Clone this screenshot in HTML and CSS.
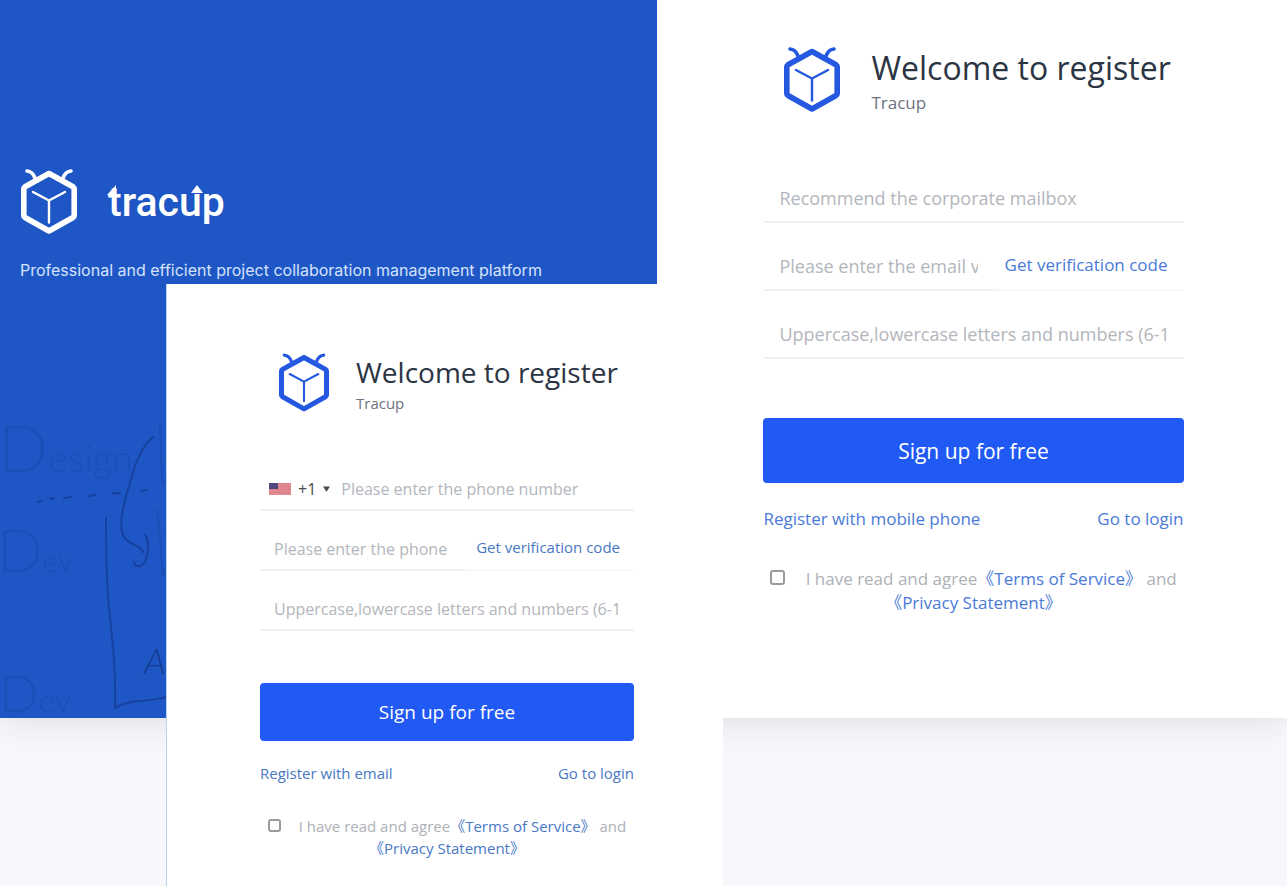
FILE: index.html
```html
<!DOCTYPE html>
<html lang="en">
<head>
  <meta charset="UTF-8">
  <meta name="viewport" content="width=device-width, initial-scale=1.0">
  <title>Tracup - Register</title>
  <link rel="stylesheet" href="styles.css">
</head>
<body>

  <!-- shared logo -->
  <svg class="sprite" aria-hidden="true">
    <symbol id="logo" viewBox="0 0 58 66">
      <g fill="none" stroke="currentColor" stroke-linecap="round" stroke-linejoin="round">
        <path stroke-width="5.6" d="M29 5 53 18.300q1.200.8 1.200 2V47q0 1.400-1.200 2L29 62.500 5 49q-1.200-.6-1.200-2V20.300q0-1.200 1.200-2Z"/>
        <path stroke-width="3.600" d="M7 2.500c4 .3 6.500 3 8 7M51 2.500c-4 .3-6.500 3-8 7"/>
        <path stroke-width="2.400" d="M13 23.500 29 32l16-8.500M29 32v22"/>
      </g>
    </symbol>
  </svg>

  <main class="page">
    <div class="hero">
      <section class="brand">
        <div class="brand-row">
          <svg class="brand-logo" role="img" aria-label="Tracup"><use href="#logo"/></svg>
          <svg class="wordmark" viewBox="0 0 130 60">
            <text x="2" y="44">tracup</text>
            <path d="M1 23 10 13v10zM85 21l6-8 6 8z"/>
          </svg>
        </div>
        <p class="tagline">Professional and efficient project collaboration management platform</p>

        <!-- whiteboard scribbles -->
        <svg class="board" viewBox="0 0 166 328" aria-hidden="true">
          <g class="board-text">
            <text x="-2" y="82"><tspan font-size="66">D</tspan><tspan font-size="38">esign</tspan></text>
            <text x="-3" y="182"><tspan font-size="60">D</tspan><tspan font-size="30">ev</tspan></text>
            <text x="-1" y="322"><tspan font-size="52">D</tspan><tspan font-size="32">ev</tspan></text>
          </g>
          <text class="board-a" x="144" y="284">A</text>
          <g class="board-lines">
            <path d="M153 47c-10 8-17 24-22 42-6 20-12 40-9 53 3 13 17 11 21 20M145 145c5 4 4 28-5 31q-5 1-6-4"/>
            <path d="M38 112l3-1M50 108q2 2 4 0M64 108l7-1M89 106l6-1M113 103q4 1 7 0M141 101l6-1"/>
            <path d="M106 128c0 30 0 60 3 90 4 36 7 66 6 100 16-10 30-5 51-11"/>
            <path class="faint" d="M160 34l2 58h4M157 120c3 24 4 44 6 65h3"/>
          </g>
        </svg>
      </section>

      <section class="email-panel" id="email">
        <form class="register register-lg">
          <header class="register-head">
            <svg class="register-logo" aria-hidden="true"><use href="#logo"/></svg>
            <div>
              <h1>Welcome to register</h1>
              <p>Tracup</p>
            </div>
          </header>
          <div class="field">
            <input type="email" aria-label="Email" placeholder="Recommend the corporate mailbox">
          </div>
          <div class="field code-field">
            <input type="text" aria-label="Email verification code" placeholder="Please enter the email v">
            <button type="button" class="code-btn">Get verification code</button>
          </div>
          <div class="field">
            <input type="password" aria-label="Password" placeholder="Uppercase,lowercase letters and numbers (6-1">
          </div>
          <button type="submit" class="submit">Sign up for free</button>
          <nav class="links">
            <a href="#phone">Register with mobile phone</a>
            <a href="#login">Go to login</a>
          </nav>
          <div class="agree">
            <input type="checkbox" id="agree-email">
            <label for="agree-email">I have read and agree<a href="#terms">《Terms of Service》</a> and <a href="#privacy">《Privacy Statement》</a></label>
          </div>
        </form>
      </section>
    </div>

    <section class="phone-window" id="phone">
      <form class="register">
        <header class="register-head">
          <svg class="register-logo" aria-hidden="true"><use href="#logo"/></svg>
          <div>
            <h1>Welcome to register</h1>
            <p>Tracup</p>
          </div>
        </header>
        <div class="field phone-field">
          <button type="button" class="country" aria-label="Country code +1">
            <svg class="flag" viewBox="0 0 22 12">
              <path fill="#e48a95" d="M0 0h22v12H0z"/>
              <path stroke="#dc7c89" d="M0 .5h22M0 3.500h22M0 6.500h22M0 9.500h22"/>
              <path fill="#4d4a7c" d="M0 0h9v6H0z"/>
            </svg>
            <span>+1</span>
            <svg class="caret" viewBox="0 0 8 6"><path d="M0 0h8L4 6z"/></svg>
          </button>
          <input type="tel" aria-label="Phone number" placeholder="Please enter the phone number">
        </div>
        <div class="field code-field">
          <input type="text" aria-label="Phone verification code" placeholder="Please enter the phone">
          <button type="button" class="code-btn">Get verification code</button>
        </div>
        <div class="field">
          <input type="password" aria-label="Password" placeholder="Uppercase,lowercase letters and numbers (6-1">
        </div>
        <button type="submit" class="submit">Sign up for free</button>
        <nav class="links">
          <a href="#email">Register with email</a>
          <a href="#login">Go to login</a>
        </nav>
        <div class="agree">
          <input type="checkbox" id="agree-phone">
          <label for="agree-phone">I have read and agree<a href="#terms">《Terms of Service》</a> and <a href="#privacy">《Privacy Statement》</a></label>
        </div>
      </form>
    </section>
  </main>

</body>
</html>
```
FILE: styles.css
```css
* {
  box-sizing: border-box;
}
body {
  margin: 0;
  font-family: "Open Sans", "Noto Sans CJK SC", sans-serif;
  background: #f7f8fb;
}
h1, p {
  margin: 0;
  font-weight: 400;
}
a {
  text-decoration: none;
}
button, input {
  font: inherit;
  border: 0;
  background: none;
  padding: 0;
}
button {
  cursor: pointer;
}
.sprite {
  display: none;
}

.page {
  position: relative;
  min-height: 100vh;
  overflow: hidden;
}
.hero {
  display: grid;
  grid-template-columns: 657fr 630fr;
  min-height: 718px;
  box-shadow: 0 0 36px rgba(40, 40, 70, .14);
}

/* blue side */
.brand {
  display: flex;
  flex-direction: column;
  background: #1e57c5;
  color: #fff;
  padding-top: 168px;
}
.brand-row {
  display: flex;
  align-items: center;
  gap: 28px;
  padding-left: 20px;
}
.brand-logo {
  width: 58px;
  height: 67px;
}
.wordmark {
  width: 130px;
  height: 60px;
  fill: #fff;
}
.wordmark text {
  font: 500 41px Roboto, sans-serif;
}
.tagline {
  padding: 23px 0 0 20px;
  font: 400 16px/24px Inter, sans-serif;
  color: #d5e2fb;
}
.board {
  width: 166px;
  height: 328px;
  margin-top: auto;
}
.board-text {
  fill: #1a4fb8;
  font-family: Lato, sans-serif;
  font-weight: 300;
}
.board-a {
  fill: #153c92;
  font: italic 300 36px Lato, sans-serif;
}
.board-lines {
  fill: none;
  stroke: #16419f;
  stroke-width: 2;
  stroke-linecap: round;
}
.board-lines .faint {
  stroke-opacity: .4;
}

.email-panel {
  display: flex;
  justify-content: center;
  background: #fff;
  padding: 46px 0 0 3px;
}
.email-panel .register {
  width: 67%;
}

/* phone window lies over the hero */
.phone-window {
  position: absolute;
  top: 284px;
  bottom: 0;
  left: 166px;
  width: 557px;
  display: flex;
  justify-content: center;
  background: #fff;
  border-left: 1px solid #b9d3ee;
  padding: 69px 0 0 4px;
}
.phone-window .register {
  width: 374px;
}

/* form */
.register {
  --text: 16px;
  --link-text: 15px;
  --link: #4878c4;
  font-size: var(--text);
}
.register-head {
  display: flex;
  align-items: flex-start;
  gap: 26px;
  padding-left: 18px;
  margin-bottom: 36px;
}
.register-logo {
  width: 52px;
  height: 59px;
  color: #2458e0;
}
.register-head h1 {
  font-size: 28px;
  line-height: 38px;
  color: #2b3443;
}
.register-head p {
  font-size: 15px;
  line-height: 24px;
  color: #6d7380;
}
.field {
  display: flex;
  height: 60px;
  padding-top: 18px;
  border-bottom: 2px solid #f1f1f2;
}
.field input {
  flex: 1;
  min-width: 0;
  padding: 0 14px;
  outline: none;
}
.field input::placeholder {
  color: #b3b6bc;
  opacity: 1;
}
.code-field {
  border-bottom: 0;
}
.code-field input {
  border-bottom: 2px solid #f1f1f2;
}
.code-btn {
  color: var(--link);
  font-size: var(--link-text);
  padding: 0 14px 4px 11px;
  border-bottom: 2px solid #f7f7f8;
}
.country {
  display: flex;
  align-items: center;
  gap: 7px;
  padding-left: 9px;
  color: #4a4a4a;
}
.flag {
  width: 22px;
  height: 12px;
}
.caret {
  width: 7px;
  height: 6px;
  fill: #4a4a4a;
}
.phone-field input {
  padding: 0 0 0 11px;
}
.submit {
  display: block;
  width: 100%;
  height: 58px;
  margin-top: 52px;
  border-radius: 4px;
  background: #2159f5;
  color: #fff;
  font-size: 19px;
}
.links {
  display: flex;
  justify-content: space-between;
  margin-top: 20px;
  font-size: var(--link-text);
  line-height: 24px;
}
.links a, .agree a {
  color: var(--link);
}
.agree {
  padding: 0 4px;
  margin-top: 30px;
  color: #aeb1b6;
  font-size: var(--link-text);
  line-height: 22px;
  text-align: center;
}
.agree input {
  appearance: none;
  width: 13px;
  height: 13px;
  margin: 0 14px 0 0;
  border: 2px solid #9a9a9d;
  border-radius: 3px;
}
.agree input:checked {
  background: #2159f5;
}

/* larger form */
.register-lg {
  --text: 18px;
  --link-text: 17px;
  --link: #4a7ad8;
}
.register-lg .register-head {
  gap: 30px;
  padding-left: 20px;
  margin-bottom: 39px;
}
.register-lg .register-logo {
  width: 58px;
  height: 67px;
}
.register-lg h1 {
  font-size: 32px;
  line-height: 44px;
}
.register-lg .register-head p {
  font-size: 17px;
  line-height: 26px;
}
.register-lg .field {
  height: 68px;
  padding-top: 20px;
}
.register-lg .field input {
  padding: 0 16px;
}
.register-lg .code-btn {
  padding: 0 16px 4px 11px;
}
.register-lg .submit {
  height: 65px;
  margin-top: 59px;
  font-size: 21px;
}
.register-lg .links {
  margin-top: 24px;
}
.register-lg .agree {
  margin-top: 36px;
  line-height: 24px;
}
.register-lg .agree input {
  width: 15px;
  height: 15px;
  margin-right: 16px;
}
```
